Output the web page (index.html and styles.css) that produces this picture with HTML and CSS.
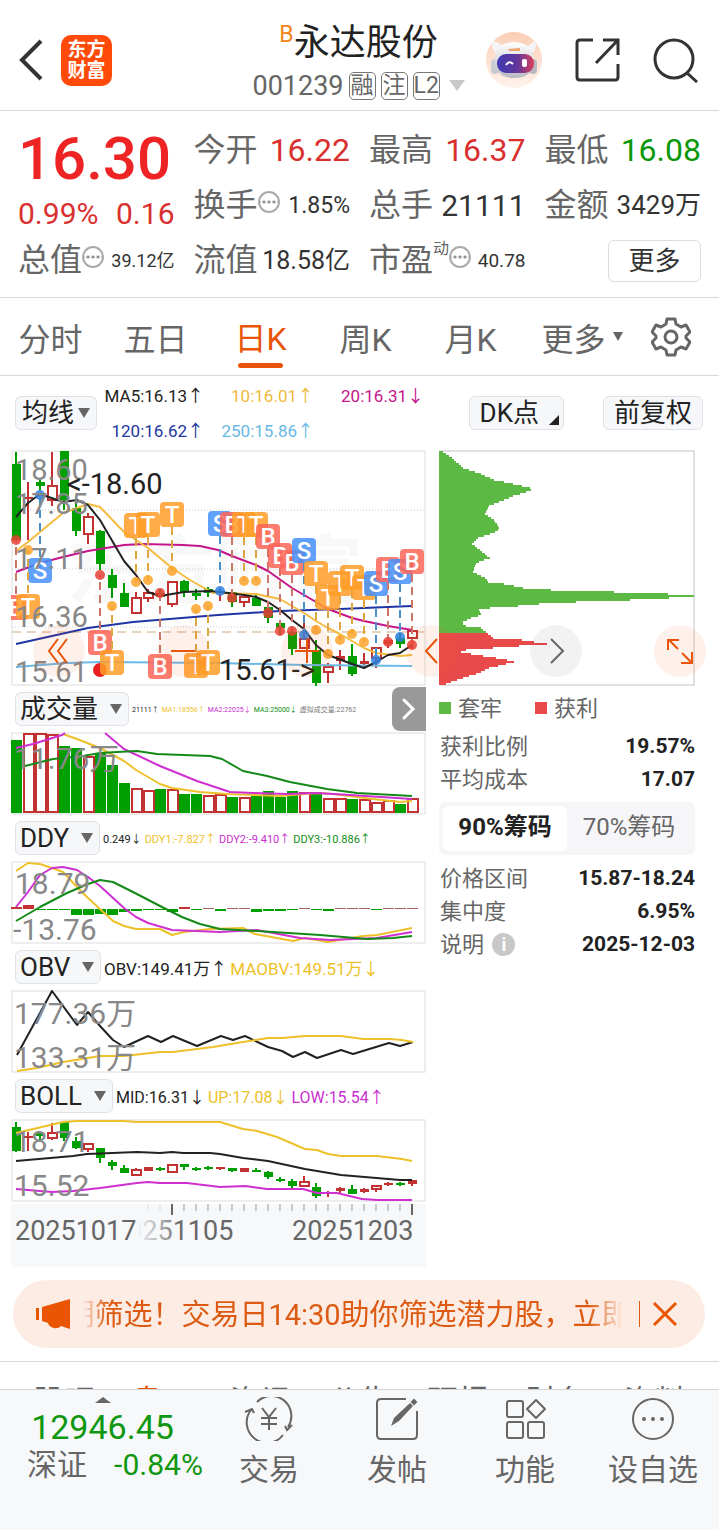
FILE: index.html
```html
<!DOCTYPE html>
<html lang="zh-CN">
<head>
    <meta charset="UTF-8">
    <meta name="viewport" content="width=device-width, initial-scale=1.0">
    <title>永达股份 001239</title>
    <link rel="stylesheet" href="styles.css">
</head>
<body>
    <header class="topbar">
        <div class="topbar-left">
            <button class="icon-btn" aria-label="返回">
                <svg width="26" height="42" viewBox="0 0 26 42"><path d="M23 2 L4 21 L23 40" fill="none" stroke="#333" stroke-width="4"/></svg>
            </button>
            <a class="logo" href="#"><span>东方</span><span>财富</span></a>
        </div>
        <div class="stock">
            <h1><sup>B</sup>永达股份</h1>
            <p>001239 <span class="tag">融</span><span class="tag">注</span><span class="tag">L2</span><i class="tri tri-light"></i></p>
        </div>
        <div class="topbar-right">
            <button class="icon-btn" aria-label="智能助手">
                <svg width="58" height="58" viewBox="0 0 58 58">
                    <defs>
                        <linearGradient id="halo" x1="0" y1="0" x2="0" y2="1"><stop offset="0" stop-color="#fbcdb5"/><stop offset="1" stop-color="#fff3ec"/></linearGradient>
                        <linearGradient id="visor" x1="0" y1="0" x2="1" y2="0"><stop offset="0" stop-color="#3f3bb5"/><stop offset=".55" stop-color="#63369c"/><stop offset="1" stop-color="#d8405c"/></linearGradient>
                        <linearGradient id="shell" x1="0" y1="0" x2="0" y2="1"><stop offset="0" stop-color="#fff"/><stop offset="1" stop-color="#b9b9c4"/></linearGradient>
                    </defs>
                    <circle cx="29" cy="29" r="28" fill="url(#halo)"/>
                    <path d="M10 22 Q5 14 8 10 Q14 11 18 16 M42 16 Q46 12 50 10 Q53 14 48 22" fill="#f4f4f6"/>
                    <rect x="6" y="28" width="8" height="15" rx="4" fill="#c9cad2"/>
                    <rect x="44" y="28" width="8" height="15" rx="4" fill="#b7b8c4"/>
                    <path d="M10 29 Q9 12 29 11 Q49 12 48 29 Q49 47 29 47 Q10 47 10 29Z" fill="url(#shell)"/>
                    <path d="M23 18 L35 17 L35 20 L24 20Z" fill="#e9a66f"/>
                    <rect x="12" y="23" width="37" height="19" rx="9" fill="url(#visor)"/>
                    <path d="M21 34 Q24 29 28 33" fill="none" stroke="#fff" stroke-width="2"/>
                    <rect x="37" y="28" width="5" height="8" rx="2" fill="#fff"/>
                </svg>
            </button>
            <button class="icon-btn" aria-label="分享">
                <svg width="46" height="46" viewBox="0 0 46 46" fill="none" stroke="#333" stroke-width="3"><path d="M18 3 H5 Q2 3 2 6 V40 Q2 43 5 43 H40 Q43 43 43 40 V27 M28 3 H43 V18 M42 4 L21 26"/></svg>
            </button>
            <button class="icon-btn" aria-label="搜索">
                <svg width="46" height="46" viewBox="0 0 46 46" fill="none" stroke="#333" stroke-width="3"><circle cx="21" cy="22" r="19"/><path d="M34 36 L44 45"/></svg>
            </button>
        </div>
    </header>

    <section class="quote">
        <div class="price">
            <strong>16.30</strong>
            <p><span>0.99%</span><span>0.16</span></p>
        </div>
        <div class="cell"><span>今开</span><b class="up">16.22</b></div>
        <div class="cell"><span>最高</span><b class="up">16.37</b></div>
        <div class="cell"><span>最低</span><b class="down">16.08</b></div>
        <div class="cell"><span>换手<i class="more-dot"></i></span><b class="size-23">1.85%</b></div>
        <div class="cell"><span>总手</span><b class="size-30">21111</b></div>
        <div class="cell"><span>金额</span><b class="size-26">3429万</b></div>
        <div class="cell"><span>总值<i class="more-dot"></i></span><b class="size-18">39.12亿</b></div>
        <div class="cell"><span>流值</span><b class="size-25">18.58亿</b></div>
        <div class="cell"><span>市盈<sup>动</sup><i class="more-dot"></i></span><b class="size-19">40.78</b></div>
        <button class="more-btn">更多</button>
    </section>

    <nav class="periods">
        <button>分时</button>
        <button>五日</button>
        <button class="active">日K</button>
        <button>周K</button>
        <button>月K</button>
        <button>更多<i class="tri tri-small"></i></button>
        <button aria-label="设置">
            <svg width="40" height="40" viewBox="0 0 40 40" fill="none" stroke="#666" stroke-width="3" stroke-linejoin="round"><path d="M16 2 H24 L25 7 L30 10 L35 8 L39 15 L35 19 V21 L39 25 L35 32 L30 30 L25 33 L24 38 H16 L15 33 L10 30 L5 32 L1 25 L5 21 V19 L1 15 L5 8 L10 10 L15 7Z"/><circle cx="20" cy="20" r="6"/></svg>
        </button>
    </nav>

    <div class="ma-bar">
        <label class="pick pick-tight"><select aria-label="均线"><option>均线</option></select></label>
        <div class="ma-values">
            <span class="c-black">MA5:16.13↑</span><span class="c-amber">10:16.01↑</span><span class="c-pink">20:16.31↓</span>
            <span class="c-navy">120:16.62↑</span><span class="c-sky">250:15.86↑</span>
        </div>
        <div class="ma-actions">
            <button class="dk">DK点</button>
            <button>前复权</button>
        </div>
    </div>

    <main class="board">
        <div class="charts">
            <svg id="kline" viewBox="0 0 415 236"></svg>
            <div class="ind-head">
                <label class="pick"><select aria-label="成交量指标"><option>成交量</option></select></label>
                <p class="size-7"><span class="c-black">21111↑</span><span class="c-gold">MA1:18556↑</span><span class="c-violet">MA2:22025↓</span><span class="c-green">MA3:25000↓</span><span class="c-gray">虚拟成交量:22762</span></p>
                <button class="side-btn" aria-label="展开"><svg width="16" height="24" viewBox="0 0 16 24"><path d="M3 3 L12 12 L3 21" fill="none" stroke="#fff" stroke-width="3" stroke-linecap="round"/></svg></button>
            </div>
            <svg id="volume" viewBox="0 0 415 83"></svg>
            <div class="ind-head">
                <label class="pick"><select aria-label="DDY指标"><option>DDY</option></select></label>
                <p class="size-11"><span class="c-black">0.249↓</span><span class="c-gold">DDY1:-7.827↑</span><span class="c-violet">DDY2:-9.410↑</span><span class="c-green">DDY3:-10.886↑</span></p>
            </div>
            <svg id="ddy" viewBox="0 0 415 83"></svg>
            <div class="ind-head">
                <label class="pick"><select aria-label="OBV指标"><option>OBV</option></select></label>
                <p class="size-17"><span class="c-black">OBV:149.41万↑</span><span class="c-gold">MAOBV:149.51万↓</span></p>
            </div>
            <svg id="obv" viewBox="0 0 415 83"></svg>
            <div class="ind-head">
                <label class="pick"><select aria-label="BOLL指标"><option>BOLL</option></select></label>
                <p class="size-16"><span class="c-black">MID:16.31↓</span><span class="c-gold">UP:17.08↓</span><span class="c-violet">LOW:15.54↑</span></p>
            </div>
            <svg id="boll" viewBox="0 0 415 83"></svg>
            <svg id="axis" class="axis" viewBox="0 0 415 63"></svg>
        </div>

        <aside class="chips">
            <svg id="chips" viewBox="0 0 256 236"></svg>
            <p class="legend"><span class="key-green">套牢</span><span class="key-red">获利</span></p>
            <dl>
                <div><dt>获利比例</dt><dd>19.57%</dd></div>
                <div><dt>平均成本</dt><dd>17.07</dd></div>
            </dl>
            <div class="segment">
                <button class="active">90%筹码</button>
                <button>70%筹码</button>
            </div>
            <dl>
                <div><dt>价格区间</dt><dd>15.87-18.24</dd></div>
                <div><dt>集中度</dt><dd>6.95%</dd></div>
                <div><dt>说明 <i class="info">i</i></dt><dd>2025-12-03</dd></div>
            </dl>
        </aside>

        <div class="tools">
            <button aria-label="快速左移"><svg viewBox="0 0 52 52"><path d="M25 14 L16 26 L25 38 M34 14 L25 26 L34 38"/></svg></button>
            <button aria-label="缩小"><svg viewBox="0 0 52 52"><path d="M14 26 H38"/></svg></button>
            <button aria-label="放大"><svg viewBox="0 0 52 52"><path d="M14 26 H38 M26 14 V38"/></svg></button>
            <button aria-label="左移"><svg viewBox="0 0 52 52"><path d="M31 14 L20 26 L31 38"/></svg></button>
            <button class="gray" aria-label="右移"><svg viewBox="0 0 52 52"><path d="M21 14 L33 26 L21 38"/></svg></button>
            <button aria-label="全屏"><svg viewBox="0 0 52 52"><path d="M14 25 V15 H25 M15 15 L24 24 M28 28 L38 38 M38 27 V38 H27"/></svg></button>
        </div>
    </main>

    <section class="notice">
        <svg width="36" height="32" viewBox="0 0 36 32" fill="#ea5504"><path d="M0 10 H3 V22 H0Z M6 9 L34 1 V31 L25 28 Q22 31 18 30 Q13 29 12 25 L6 23Z"/></svg>
        <p>期筛选！交易日14:30助你筛选潜力股，立即</p>
        <button aria-label="关闭"><svg width="26" height="26" viewBox="0 0 26 26"><path d="M2 2 L24 24 M24 2 L2 24" stroke="#ea5504" stroke-width="3"/></svg></button>
    </section>

    <nav class="subtabs">
        <a href="#">股吧</a><a class="active" href="#">盘口</a><a href="#">资讯</a><a href="#">公告</a><a href="#">研报</a><a href="#">财务</a><a href="#">资料</a>
    </nav>

    <footer class="bottombar">
        <a class="index" href="#">
            <i class="caret"></i>
            <b>12946.45</b>
            <span>深证<em>-0.84%</em></span>
        </a>
        <button>
            <svg width="50" height="44" viewBox="0 0 50 44" fill="none" stroke="#666" stroke-width="2"><path d="M13 5 A20 20 0 0 1 44 30 M39 38 A20 20 0 0 1 7 13 M1 15 L8 12 L10 16 M41 29 L43 33 L48 28"/><path d="M18 11 L25 20 L32 11 M25 20 V33 M17 21 H33 M17 27 H33"/></svg>
            交易
        </button>
        <button>
            <svg width="44" height="44" viewBox="0 0 44 44" fill="none" stroke="#666" stroke-width="2"><path d="M31 2 H6 Q2 2 2 6 V38 Q2 42 6 42 H38 Q42 42 42 38 V14"/><path d="M16 29 L19 21 L35 6 L38 9 L24 24Z" fill="#666" stroke="none"/><path d="M37 5 L39 3 L41 5 L39 7Z" fill="#666"/></svg>
            发帖
        </button>
        <button>
            <svg width="44" height="44" viewBox="0 0 44 44" fill="none" stroke="#666" stroke-width="2"><rect x="4" y="4" width="16" height="16" rx="2"/><rect x="4" y="25" width="16" height="16" rx="2"/><rect x="25" y="25" width="16" height="16" rx="2"/><path d="M33 3 L42 12 L33 21 L24 12Z" stroke-linejoin="round"/></svg>
            功能
        </button>
        <button>
            <svg width="44" height="44" viewBox="0 0 44 44" fill="none" stroke="#666" stroke-width="2"><circle cx="22" cy="22" r="20"/><g fill="#666" stroke="none"><circle cx="13" cy="22" r="2"/><circle cx="22" cy="22" r="2"/><circle cx="31" cy="22" r="2"/></g></svg>
            设自选
        </button>
    </footer>

    <script src="charts.js"></script>
</body>
</html>
```
FILE: styles.css
```css
* {
    box-sizing: border-box;
}

body {
    margin: 0;
    background: #fff;
    color: #333;
    font-family: Roboto, "Noto Sans CJK SC", sans-serif;
}

h1, p, dl, dd {
    margin: 0;
}

i, em {
    font-style: normal;
}

a {
    color: inherit;
    text-decoration: none;
}

button, select {
    margin: 0;
    padding: 0;
    border: 0;
    background: none;
    color: inherit;
    font: inherit;
}

svg {
    display: block;
}

.up { color: #d9302f; }
.down { color: #0a980a; }
.c-black { color: #222; }
.c-amber { color: #f0b93c; }
.c-pink { color: #c4168a; }
.c-navy { color: #2036a0; }
.c-sky { color: #68b8e4; }
.c-gold { color: #edc12a; }
.c-violet { color: #c92fd0; }
.c-green { color: #0f8d14; }
.c-gray { color: #777; }

/* 顶部 */
.topbar {
    display: grid;
    grid-template-columns: 1fr auto 1fr;
    align-items: center;
    height: 111px;
    padding: 10px 20px 0 18px;
    border-bottom: 1px solid #d8d8d8;
}

.topbar-left, .topbar-right {
    display: flex;
    align-items: center;
}

.topbar-left {
    gap: 17px;
}

.topbar-right {
    justify-content: flex-end;
    gap: 32px;
}

.logo {
    display: flex;
    flex-direction: column;
    align-items: center;
    justify-content: center;
    width: 51px;
    height: 51px;
    border-radius: 10px;
    background: #ff4a0a;
    color: #fff;
    font-size: 19px;
    font-weight: 700;
    line-height: 21px;
}

.stock {
    padding-top: 7px;
    text-align: center;
    color: #666;
}

.stock h1 {
    color: #222;
    font-size: 36px;
    font-weight: 400;
    line-height: 44px;
}

.stock sup {
    color: #f08519;
    font-size: 23px;
    line-height: 1;
}

.stock p {
    display: flex;
    align-items: center;
    gap: 5px;
    height: 42px;
    font-size: 27px;
}

.tag {
    width: 27px;
    height: 28px;
    border: 1px solid #777;
    border-radius: 5px;
    font-size: 23px;
    line-height: 25px;
}

.tri {
    display: inline-block;
    border: 8px solid transparent;
    border-top: 11px solid #666;
    border-bottom: 0;
}

.tri-light {
    margin-left: 4px;
    border-top-color: #c9c9c9;
}

.tri-small {
    margin-left: 7px;
    border-width: 9px 5px 0;
    vertical-align: 7px;
}

/* 行情 */
.quote {
    display: grid;
    grid-template-columns: repeat(4, 1fr);
    grid-auto-rows: 55px;
    column-gap: 19px;
    padding: 12px 18px 9px;
    border-bottom: 1px solid #d8d8d8;
}

.price {
    grid-row: span 2;
    color: #d9302f;
    font-size: 30px;
}

.price strong {
    display: block;
    color: #ee2424;
    font-size: 60px;
    font-weight: 500;
    line-height: 72px;
}

.price p {
    display: flex;
    justify-content: space-between;
    line-height: 38px;
}

.cell {
    display: flex;
    align-items: center;
    justify-content: space-between;
    white-space: nowrap;
}

.cell span {
    color: #666;
    font-size: 32px;
    line-height: 57px;
}

.cell b {
    font-size: 32px;
    font-weight: 400;
    line-height: 53px;
}

.cell sup {
    font-size: 16px;
    line-height: 1;
    vertical-align: 17px;
}

.more-dot {
    display: inline-block;
    width: 22px;
    height: 22px;
    border: 2px solid #aaa;
    border-radius: 50%;
    background: radial-gradient(circle, #888 1px, transparent 2px) center / 5px 18px;
    vertical-align: 3px;
}

.cell .size-18 { font-size: 18px; }
.cell .size-19 { font-size: 19px; }
.cell .size-23 { font-size: 23px; }
.cell .size-25 { font-size: 25px; }
.cell .size-26 { font-size: 26px; }
.cell .size-30 { font-size: 30px; }

.more-btn {
    align-self: center;
    justify-self: end;
    width: 93px;
    height: 42px;
    border: 1px solid #ddd;
    border-radius: 6px;
    font-size: 26px;
    line-height: 36px;
}

/* 周期 */
.periods {
    display: grid;
    grid-template-columns: repeat(5, 105fr) 118fr 56fr;
    height: 78px;
    padding-right: 20px;
    border-bottom: 1px solid #d8d8d8;
    color: #666;
    font-size: 32px;
}

.periods button {
    display: flex;
    flex-direction: column;
    align-items: center;
    justify-content: center;
    padding-right: 4px;
}

.periods button:nth-child(6) {
    flex-direction: row;
}

.periods button:last-child {
    padding: 0;
}

.periods .active {
    color: #e85508;
    padding-top: 8px;
}

.periods .active::after {
    content: "";
    width: 45px;
    height: 5px;
    margin-top: 4px;
    border-radius: 3px;
    background: #e85508;
}

/* 均线 */
.ma-bar {
    display: flex;
    align-items: center;
    height: 74px;
    padding: 0 16px 0 15px;
}

.ma-values {
    display: grid;
    grid-template-columns: 107px 110px 110px;
    padding-top: 2px;
    font-size: 17px;
    line-height: 35px;
    text-align: right;
}

.ma-actions {
    display: flex;
    flex: 1;
    justify-content: flex-end;
    gap: 39px;
}

.ma-actions button, .pick {
    height: 34px;
    border: 1px solid #dfe1e6;
    border-radius: 6px;
    background: #f6f7f9;
    color: #222;
    font-size: 26px;
    line-height: 32px;
}

.ma-actions button {
    padding: 0 10px;
}

.ma-actions .dk::after {
    content: "";
    display: inline-block;
    margin: 0 -6px 0 10px;
    border: 5px solid #222;
    border-top-color: transparent;
    border-left-color: transparent;
    vertical-align: -3px;
}

.pick {
    display: flex;
    align-items: center;
    gap: 11px;
    padding: 0 6px 0 4px;
}

.pick-tight {
    gap: 3px;
    padding-left: 6px;
}

.pick select {
    height: 32px;
    appearance: none;
}

.pick::after {
    content: "";
    border: 6px solid transparent;
    border-top: 10px solid #666;
    border-bottom: 0;
}

/* 图表 */
.board {
    position: relative;
    display: grid;
    grid-template-columns: 415fr 256fr;
    column-gap: 13px;
    align-items: start;
    padding: 0 24px 0 11px;
}

.charts svg, .chips svg {
    width: 100%;
}

.ind-head {
    display: flex;
    align-items: center;
    height: 46px;
    padding-left: 4px;
}

.ind-head p {
    display: flex;
    flex: 1;
    gap: 3px;
    padding-left: 3px;
    white-space: nowrap;
}

.size-7 { font-size: 7px; }
.size-11 { font-size: 11px; }
.size-16 { font-size: 16px; }
.size-17 { font-size: 17px; }

.side-btn {
    display: flex;
    align-items: center;
    justify-content: center;
    width: 34px;
    height: 44px;
    border-radius: 8px 0 0 8px;
    background: #999;
}

.charts .side-btn svg {
    width: 16px;
}

.axis {
    margin-top: 2px;
    background: #f7f8fa;
}

.price-value {
    fill: #888;
    font-size: 29px;
}

.axis-value {
    fill: #888;
    font-size: 30px;
}

.mark-value {
    fill: #222;
    font-size: 29px;
}

.axis-date {
    fill: #666;
    font-size: 27px;
}

.watermark {
    fill: #f8f8f8;
    font-size: 74px;
    font-weight: 700;
}

.signal {
    fill: #fff;
    font-size: 24px;
    font-weight: 500;
    text-anchor: middle;
}

.tools {
    position: absolute;
    top: 175px;
    left: 33px;
    right: 13px;
    display: flex;
    justify-content: space-between;
}

.tools button {
    width: 52px;
    height: 52px;
    border-radius: 50%;
    background: rgba(240, 90, 20, 0.09);
}

.tools .gray {
    background: rgba(0, 0, 0, 0.05);
}

.tools path {
    fill: none;
    stroke: #e85508;
    stroke-width: 2;
}

.tools .gray path {
    stroke: #666;
}

/* 筹码 */
.chips {
    color: #666;
    font-size: 22px;
}

.legend {
    display: flex;
    gap: 33px;
    padding-top: 2px;
    line-height: 42px;
}

.legend span::before {
    content: "";
    display: inline-block;
    width: 12px;
    height: 12px;
    margin-right: 7px;
    background: #5cb944;
    vertical-align: 2px;
}

.legend .key-red::before {
    background: #e84a4a;
}

.chips dl div {
    display: flex;
    justify-content: space-between;
    height: 33px;
    padding-left: 1px;
    line-height: 33px;
}

.chips dd {
    color: #222;
    font-size: 21px;
    font-weight: 700;
}

.segment {
    display: grid;
    grid-template-columns: 1fr 1fr;
    height: 53px;
    margin: 6px 0 7px;
    padding: 4px;
    border-radius: 6px;
    background: #f6f6f9;
    font-size: 24px;
    line-height: 40px;
}

.segment button {
    padding-bottom: 4px;
}

.segment .active {
    border-radius: 6px;
    background: #fff;
    color: #222;
    font-weight: 700;
}

.info {
    display: inline-block;
    width: 23px;
    height: 23px;
    margin-left: 3px;
    border-radius: 50%;
    background: #c8c8c8;
    color: #fff;
    font-size: 18px;
    font-weight: 700;
    line-height: 23px;
    text-align: center;
    vertical-align: 1px;
}

/* 通知 */
.notice {
    display: flex;
    align-items: center;
    height: 68px;
    margin: 13px 14px 13px 13px;
    padding: 0 27px 0 23px;
    border-radius: 34px;
    background: #fdece3;
    color: #dc5a12;
    font-size: 29px;
}

.notice p {
    display: flex;
    flex: 1;
    justify-content: center;
    margin: 0 16px 0 1px;
    padding-bottom: 4px;
    overflow: hidden;
    white-space: nowrap;
    mask-image: linear-gradient(to right, transparent 10px, #000 34px, #000 calc(100% - 34px), transparent);
}

.notice button {
    padding-left: 12px;
    border-left: 1px solid #dc5a12;
}

.subtabs {
    display: flex;
    justify-content: space-between;
    height: 28px;
    padding: 14px 33px 0;
    border-top: 1px solid #d8d8d8;
    overflow: hidden;
    color: #666;
    font-size: 31px;
}

.subtabs .active {
    color: #e85508;
}

/* 底部 */
.bottombar {
    display: grid;
    grid-template-columns: 205fr repeat(4, 128fr);
    height: 141px;
    padding: 7px 2px 0 0;
    border-top: 1px solid #d5d5d5;
    background: #f7f8fa;
    color: #666;
    font-size: 30px;
}

.bottombar button {
    display: flex;
    flex-direction: column;
    align-items: center;
    gap: 7px;
    line-height: 44px;
}

.index {
    display: flex;
    flex-direction: column;
    align-items: center;
}

.index b {
    color: #0f970f;
    font-size: 34px;
    font-weight: 400;
    line-height: 48px;
}

.index span {
    display: flex;
    gap: 27px;
    padding-left: 25px;
    line-height: 28px;
}

.index em {
    color: #0f970f;
}

.caret {
    border: 8px solid transparent;
    border-top: 0;
    border-bottom: 6px solid #666;
}
```
FILE: charts.js
```js
const NS = 'http://www.w3.org/2000/svg';
const GREEN = '#009f00';
const RED = '#c23232';
const STEP = 12;

function add(svg, tag, attrs, text) {
    const el = document.createElementNS(NS, tag);
    for (const key in attrs) {
        el.setAttribute(key, attrs[key]);
    }
    if (text) {
        el.textContent = text;
    }
    svg.appendChild(el);
    return el;
}

function cx(i) {
    return 5 + STEP * i;
}

function frame(svg, w, h, color) {
    add(svg, 'rect', { x: 1, y: 1, width: w - 2, height: h - 2, fill: 'none', stroke: color || '#ddd' });
}

function line(svg, points, color) {
    add(svg, 'polyline', { points: points, fill: 'none', stroke: color, 'stroke-width': 2, 'stroke-linejoin': 'round' });
}

function label(svg, x, y, text, cls) {
    add(svg, 'text', { x: x, y: y, class: cls || 'axis-value' }, text);
}

// [type, high, low, body top, body bottom]; g = fall, r = rise, s = solid rise
function candles(svg, rows) {
    rows.forEach(([type, high, low, top, bottom], i) => {
        const x = cx(i);
        const color = type === 'g' ? GREEN : RED;
        add(svg, 'path', { d: `M${x} ${high}V${low}`, stroke: color, 'stroke-width': 2 });
        if (type === 'r') {
            add(svg, 'rect', { x: x - 4, y: top + 1, width: 9, height: bottom - top - 2, fill: '#fff', stroke: color, 'stroke-width': 2 });
        } else {
            add(svg, 'rect', { x: x - 4, y: top, width: 9, height: bottom - top, fill: color });
        }
    });
}

// K 线
const kline = document.getElementById('kline');
label(kline, 56, 147, '东方财富', 'watermark');
[60, 119, 177].forEach(y => add(kline, 'path', { d: `M1 ${y}H414`, stroke: '#ccc', 'stroke-dasharray': '1 2' }));
add(kline, 'path', { d: 'M1 182H414', stroke: '#cfa878', 'stroke-dasharray': '9 6' });
frame(kline, 415, 236);
candles(kline, [
    ['g', 2, 92, 14, 90], ['s', 32, 90, 47, 49], ['g', 30, 40, 32, 36], ['r', 2, 56, 35, 51], ['g', 1, 60, 1, 50],
    ['g', 47, 86, 58, 81], ['r', 63, 94, 66, 85], ['g', 80, 120, 81, 114], ['g', 119, 148, 125, 138], ['g', 133, 157, 143, 157],
    ['r', 142, 164, 147, 164], ['r', 139, 152, 142, 149], ['g', 139, 151, 143, 147], ['r', 131, 157, 131, 155], ['g', 130, 147, 131, 142],
    ['g', 139, 150, 143, 146], ['g', 137, 147, 139, 143], ['s', 138, 151, 141, 144], ['g', 140, 157, 142, 152], ['r', 145, 157, 146, 153],
    ['g', 143, 156, 148, 156], ['g', 153, 173, 157, 168], ['g', 171, 185, 173, 178], ['g', 177, 205, 182, 199], ['r', 167, 198, 188, 199],
    ['g', 190, 236, 200, 233], ['r', 213, 233, 216, 223], ['s', 200, 220, 206, 211], ['g', 194, 226, 206, 224], ['s', 203, 219, 211, 214],
    ['r', 197, 218, 197, 209], ['s', 186, 198, 190, 194], ['g', 183, 198, 188, 194], ['r', 177, 199, 180, 189]
]);
line(kline, '5,217 56,213 89,212 207,213 293,215 401,216', '#6cb9e6');
line(kline, '5,194 77,178 122,172 207,165 269,161 329,159 401,156', '#1f35a5');
line(kline, '5,122 29,113 52,107 77,101 113,95 132,94 172,95 189,96 207,100 221,106 245,115 257,121 281,138 305,152 317,159 341,168 353,171 377,176 401,180', '#c4168a');
line(kline, '5,101 17,92 29,82 52,63 77,54 89,57 113,82 137,98 161,118 179,130 202,143 245,144 269,149 293,163 305,171 317,178 329,184 353,198 365,203 389,206 401,205', '#f5bb40');
line(kline, '5,67 17,53 29,44 52,52 66,50 77,55 89,70 113,111 125,125 137,142 149,146 161,144 173,142 199,141 209,142 233,145 245,147 257,152 269,160 281,170 293,179 305,195 317,205 341,214 353,218 365,212 377,205 389,203 401,195', '#222');

// 买卖信号: [index, letter, tag y, dot y]
const tones = { B: '#fb6557', S: '#4590fa', T: '#ff9d28' };
const dots = { B: '#e84034', S: '#2f7fe0', T: '#fba32c' };
const stems = { B: '#cc7468', S: '#4a90c8', T: '#dea640' };
[
    [2, 'S', 120, 45], [0, 'B', 157, 90], [1, 'T', 156, 100], [10, 'T', 75, 132], [11, 'T', 74, 130], [13, 'T', 64, 121],
    [7, 'B', 192, 125], [8, 'T', 212, 156], [12, 'B', 216, 143], [15, 'T', 215, 159], [16, 'T', 212, 156],
    [17, 'S', 73, 141], [18, 'B', 74, 148], [19, 'T', 74, 131], [20, 'T', 74, 131], [21, 'B', 86, 163], [22, 'B', 105, 181],
    [23, 'B', 112, 181], [24, 'S', 100, 185], [25, 'T', 123, 180], [26, 'T', 147, 204], [27, 'T', 133, 190], [28, 'T', 127, 184],
    [29, 'T', 137, 192], [30, 'S', 133, 210], [31, 'B', 119, 192], [32, 'S', 121, 187], [33, 'B', 111, 195]
].forEach(([i, letter, tagY, dotY]) => {
    const x = cx(i);
    if (i === 7) {
        add(kline, 'circle', { cx: x, cy: 220, r: 7, fill: '#e82020' });
    }
    add(kline, 'path', { d: `M${x} ${tagY}V${dotY}`, stroke: stems[letter], 'stroke-width': 2, 'stroke-dasharray': '8 5' });
    add(kline, 'circle', { cx: x, cy: dotY, r: 5, fill: dots[letter], opacity: 0.85 });
    add(kline, 'rect', { x: x - 12, y: tagY - 12, width: 24, height: 25, rx: 4, fill: tones[letter], opacity: 0.85 });
    add(kline, 'text', { x: x, y: tagY + 9, class: 'signal' }, letter);
});
[['18.60', 30], ['17.85', 64], ['17.11', 119], ['16.36', 177], ['15.61', 232]].forEach(([t, y]) => label(kline, 4, y, t, 'price-value'));
label(kline, 56, 44, '<-18.60', 'mark-value');
label(kline, 208, 230, '15.61->', 'mark-value');

// 成交量
const volume = document.getElementById('volume');
frame(volume, 415, 83);
[
    'g8', 'r1', 'r1', 'r2', 'g14', 'g16', 'r24', 'g21', 'g33', 'g51', 'r56', 'r58', 'g57', 'r57', 'g62', 'g62', 'r63',
    'r62', 'g65', 'r65', 'g64', 'g59', 'g65', 'g59', 'r60', 'g60', 'r66', 'r66', 'g67', 'r67', 'r70', 'r68', 'g72', 'r66'
].forEach((item, i) => {
    const top = Number(item.slice(1));
    if (item[0] === 'g') {
        add(volume, 'rect', { x: STEP * i, y: top, width: 11, height: 81 - top, fill: GREEN });
    } else {
        add(volume, 'rect', { x: STEP * i + 1, y: top + 1, width: 10, height: 79 - top, fill: '#fff', stroke: RED, 'stroke-width': 2 });
    }
});
line(volume, '52,2 66,7 89,16 113,29 125,38 149,52 161,56 189,60 216,62 269,64 306,61 322,62 362,67 389,70 401,69', '#edc12a');
line(volume, '5,16 22,12 51,3 54,1', '#ce30d2');
line(volume, '94,1 113,17 149,34 186,49 219,60 242,61 276,62 306,61 339,63 401,67', '#ce30d2');
line(volume, '14,34 42,27 72,24 89,21 106,20 126,19 146,22 199,24 211,27 232,39 256,44 279,50 316,57 346,61 401,64', '#138a18');
label(volume, 3, 37, '11.76万');

// DDY
const ddy = document.getElementById('ddy');
frame(ddy, 415, 83);
[2, 4, -1, -1, -1, -6, -6, -5, -6, -3, -2, -1, -1, -3, 2, -1, 1, -2, 1, 1, -3, -2, -2, -1, 1, -1, -2, 1, 1, 1, -1, 1, 1, 1].forEach((v, i) => {
    add(ddy, 'rect', { x: STEP * i, y: v > 0 ? 48 - v : 48, width: 11, height: Math.abs(v), fill: v > 1 ? RED : v > 0 ? '#a86464' : GREEN });
});
line(ddy, '5,10 17,2 29,3 41,7 52,11 66,26 77,37 102,60 113,65 125,68 149,68 161,74 173,71 199,68 232,67 244,73 282,80 294,77 317,81 352,75 366,74 401,67', '#edc12a');
line(ddy, '5,46 17,31 29,14 41,7 52,6 66,9 77,16 89,25 113,47 125,56 137,62 161,69 209,71 246,69 289,77 319,79 366,77 401,71', '#ce30d2');
line(ddy, '5,60 29,46 56,32 77,23 89,19 102,21 122,31 149,45 171,56 189,63 209,68 246,70 309,74 356,78 382,77 401,75', '#138a18');
label(ddy, 4, 33, '18.79');
label(ddy, 2, 79, '-13.76');

// OBV
const obv = document.getElementById('obv');
frame(obv, 415, 83);
line(obv, '6,65 41,1 66,35 77,22 89,36 102,50 113,57 137,46 150,52 162,46 186,56 210,46 222,50 234,46 257,57 271,61 282,67 294,62 306,68 330,60 342,64 378,53 389,56 402,52', '#222');
line(obv, '6,81 26,78 52,72 89,66 113,66 149,62 162,62 202,57 232,52 257,48 271,48 294,46 330,46 352,49 379,49 391,50 402,52', '#edc12a');
label(obv, 3, 34, '177.36万');
label(obv, 3, 78, '133.31万');

// BOLL
const boll = document.getElementById('boll');
frame(boll, 415, 83);
candles(boll, [
    ['g', 3, 33, 8, 32], ['s', 13, 32, 17, 19], ['g', 13, 21, 14, 17], ['r', 4, 21, 13, 20], ['g', 3, 22, 3, 19],
    ['g', 18, 30, 22, 29], ['r', 24, 33, 24, 31], ['g', 29, 44, 29, 39], ['g', 41, 51, 43, 47], ['g', 46, 54, 49, 54],
    ['r', 49, 57, 50, 57], ['s', 48, 52, 48, 52], ['g', 48, 52, 49, 51], ['r', 45, 54, 45, 54], ['g', 45, 51, 45, 48],
    ['g', 48, 52, 49, 51], ['g', 47, 51, 48, 50], ['s', 48, 51, 48, 50], ['g', 49, 53, 49, 52], ['s', 49, 53, 49, 53],
    ['g', 49, 53, 51, 53], ['g', 52, 60, 53, 58], ['g', 58, 63, 60, 62], ['g', 60, 69, 62, 67], ['r', 57, 68, 62, 68],
    ['g', 64, 79, 68, 77], ['s', 72, 78, 73, 75], ['s', 68, 74, 69, 72], ['g', 66, 75, 70, 75], ['s', 69, 74, 70, 73],
    ['r', 66, 73, 66, 71], ['s', 63, 67, 64, 66], ['g', 63, 67, 64, 66], ['s', 61, 67, 61, 65]
]);
line(boll, '5,14 52,3 66,2 113,2 126,3 209,3 232,10 246,12 266,18 294,30 306,31 317,35 330,37 366,37 391,40 401,42', '#edc12a');
line(boll, '5,42 62,37 76,35 126,33 149,34 161,33 172,34 199,34 209,35 232,39 257,42 294,50 330,56 389,61 401,61', '#222');
line(boll, '5,70 41,73 62,72 89,69 126,64 137,63 149,64 176,64 209,68 234,67 256,70 292,70 306,74 326,74 351,80 366,81 389,81 401,81', '#ce30d2');
label(boll, 3, 33, '18.71');
label(boll, 3, 77, '15.52');

// 日期轴
const axis = document.getElementById('axis');
const fade = add(axis, 'linearGradient', { id: 'fade', gradientUnits: 'userSpaceOnUse', x1: 126, x2: 172, y1: 0, y2: 0 });
add(fade, 'stop', { offset: 0, 'stop-color': '#666', 'stop-opacity': 0 });
add(fade, 'stop', { offset: 1, 'stop-color': '#666' });
for (let i = 11; i < 34; i++) {
    const main = i === 13 || i === 33;
    add(axis, 'path', { d: `M${cx(i)} 0V${main ? 11 : 7}`, stroke: i < 13 ? '#ddd' : main ? '#666' : '#999', 'stroke-width': main ? 2 : 1 });
}
label(axis, 4, 36, '20251017', 'axis-date');
add(axis, 'text', { x: 101, y: 36, class: 'axis-date', style: 'fill: url(#fade)' }, '20251105');
label(axis, 281, 36, '20251203', 'axis-date');

// 筹码分布: [y, width]
const chips = document.getElementById('chips');
const profile = [
    [1, 3], [8, 13], [17, 23], [23, 41], [29, 54], [32, 69], [36, 86], [38, 93], [42, 84], [45, 73], [49, 64], [55, 49], [63, 45],
    [68, 53], [78, 60], [82, 53], [87, 38], [93, 32], [100, 41], [107, 50], [112, 36], [121, 33], [127, 45], [132, 49], [133, 64],
    [137, 83], [139, 111], [141, 174], [143, 228], [145, 254], [147, 229], [149, 190], [151, 136], [153, 99], [155, 78], [157, 50],
    [158, 39], [164, 41], [167, 31], [172, 21], [175, 26], [177, 41], [182, 47], [187, 53], [188, 76], [191, 94], [193, 107],
    [195, 79], [197, 53], [198, 28], [201, 21], [204, 36], [208, 63], [212, 78], [213, 66], [217, 49], [222, 39], [227, 23], [232, 8], [236, 1]
];
frame(chips, 256, 236, '#c4c4c4');
for (let y = 1; y < 235; y += 2) {
    const k = profile.findIndex(p => p[0] > y);
    const [y0, w0] = profile[k - 1];
    const [y1, w1] = profile[k];
    const w = Math.round(w0 + (w1 - w0) * (y - y0) / (y1 - y0));
    add(chips, 'rect', { x: 0, y: y, width: w + 1, height: 2, fill: y < 182 ? '#5cb944' : '#e84a4a' });
}
```
